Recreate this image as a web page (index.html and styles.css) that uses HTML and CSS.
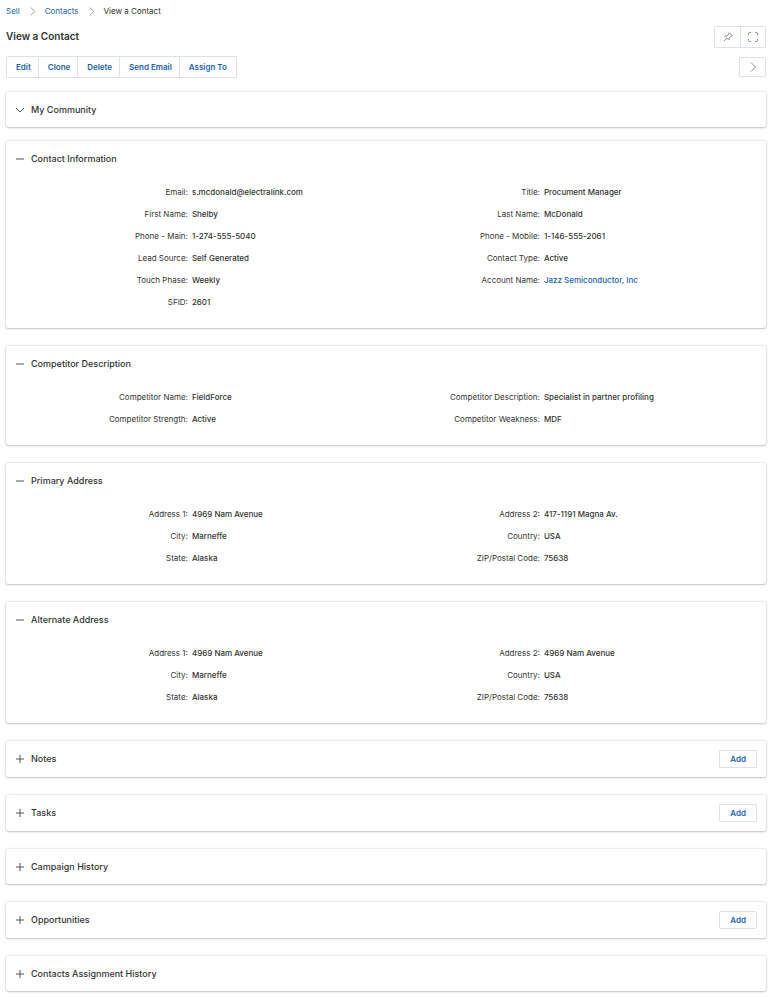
FILE: index.html
```html
<!DOCTYPE html>
<html lang="en">
<head>
<meta charset="utf-8">
<title>View a Contact</title>
<link rel="stylesheet" href="styles.css">
</head>
<body>
<svg class="sprite" aria-hidden="true">
  <symbol id="minus" viewBox="0 0 10 10"><path d="M1 5H9"/></symbol>
  <symbol id="plus" viewBox="0 0 10 10"><path d="M1 5H9M5 1V9"/></symbol>
  <symbol id="down" viewBox="0 0 10 10"><path d="M1 3L5 7L9 3"/></symbol>
  <symbol id="right" viewBox="0 0 10 10"><path d="M3 0.5L7.5 5L3 9.5"/></symbol>
</svg>
<header class="page-head">
  <nav class="crumbs" aria-label="Breadcrumb">
    <a href="#">Sell</a>
    <svg class="icon crumb-sep"><use href="#right"/></svg>
    <a href="#">Contacts</a>
    <svg class="icon crumb-sep"><use href="#right"/></svg>
    <span>View a Contact</span>
  </nav>
  <div class="bar">
    <h1>View a Contact</h1>
    <div class="group tools">
      <button type="button" aria-label="Pin"><svg class="icon" viewBox="0 0 10 10"><path d="M6.2 0.7L9.3 3.8L8.5 4.2L7.9 4.1L6.3 5.8L6.2 7.4L5.6 8L2 4.4L2.6 3.8L4.2 3.7L5.9 2.1L5.8 1.5ZM3.7 6.3L0.8 9.2"/></svg></button>
      <button type="button" aria-label="Full screen"><svg class="icon" viewBox="0 0 10 10"><path d="M0.5 3V1.5Q0.5 0.5 1.5 0.5H3M7 0.5H8.5Q9.5 0.5 9.5 1.5V3M9.5 7V8.5Q9.5 9.5 8.5 9.5H7M3 9.5H1.5Q0.5 9.5 0.5 8.5V7"/></svg></button>
    </div>
  </div>
  <div class="bar">
    <div class="group">
      <button type="button">Edit</button>
      <button type="button">Clone</button>
      <button type="button">Delete</button>
      <button type="button">Send Email</button>
      <button type="button">Assign To</button>
    </div>
    <div class="group next">
      <button type="button" aria-label="Next"><svg class="icon"><use href="#right"/></svg></button>
    </div>
  </div>
</header>
<main>
  <section class="card community">
    <div class="card-head"><h2><button type="button" class="toggle"><svg class="icon"><use href="#down"/></svg>My Community</button></h2></div>
  </section>
  <section class="card">
    <div class="card-head"><h2><button type="button" class="toggle" aria-expanded="true"><svg class="icon"><use href="#minus"/></svg>Contact Information</button></h2></div>
    <div class="fields">
      <dl>
        <dt>Email:</dt><dd>s.mcdonald@electralink.com</dd>
        <dt>First Name:</dt><dd>Shelby</dd>
        <dt>Phone - Main:</dt><dd>1-274-555-5040</dd>
        <dt>Lead Source:</dt><dd>Self Generated</dd>
        <dt>Touch Phase:</dt><dd>Weekly</dd>
        <dt>SFID:</dt><dd>2601</dd>
      </dl>
      <dl>
        <dt>Title:</dt><dd>Procument Manager</dd>
        <dt>Last Name:</dt><dd>McDonald</dd>
        <dt>Phone - Mobile:</dt><dd>1-146-555-2061</dd>
        <dt>Contact Type:</dt><dd>Active</dd>
        <dt>Account Name:</dt><dd><a href="#">Jazz Semiconductor, Inc</a></dd>
      </dl>
    </div>
  </section>
  <section class="card">
    <div class="card-head"><h2><button type="button" class="toggle" aria-expanded="true"><svg class="icon"><use href="#minus"/></svg>Competitor Description</button></h2></div>
    <div class="fields">
      <dl>
        <dt>Competitor Name:</dt><dd>FieldForce</dd>
        <dt>Competitor Strength:</dt><dd>Active</dd>
      </dl>
      <dl>
        <dt>Competitor Description:</dt><dd>Specialist in partner profiling</dd>
        <dt>Competitor Weakness:</dt><dd>MDF</dd>
      </dl>
    </div>
  </section>
  <section class="card">
    <div class="card-head"><h2><button type="button" class="toggle" aria-expanded="true"><svg class="icon"><use href="#minus"/></svg>Primary Address</button></h2></div>
    <div class="fields">
      <dl>
        <dt>Address 1:</dt><dd>4969 Nam Avenue</dd>
        <dt>City:</dt><dd>Marneffe</dd>
        <dt>State:</dt><dd>Alaska</dd>
      </dl>
      <dl>
        <dt>Address 2:</dt><dd>417-1191 Magna Av.</dd>
        <dt>Country:</dt><dd>USA</dd>
        <dt>ZIP/Postal Code:</dt><dd>75638</dd>
      </dl>
    </div>
  </section>
  <section class="card">
    <div class="card-head"><h2><button type="button" class="toggle" aria-expanded="true"><svg class="icon"><use href="#minus"/></svg>Alternate Address</button></h2></div>
    <div class="fields">
      <dl>
        <dt>Address 1:</dt><dd>4969 Nam Avenue</dd>
        <dt>City:</dt><dd>Marneffe</dd>
        <dt>State:</dt><dd>Alaska</dd>
      </dl>
      <dl>
        <dt>Address 2:</dt><dd>4969 Nam Avenue</dd>
        <dt>Country:</dt><dd>USA</dd>
        <dt>ZIP/Postal Code:</dt><dd>75638</dd>
      </dl>
    </div>
  </section>
  <section class="card">
    <div class="card-head"><h2><button type="button" class="toggle" aria-expanded="false"><svg class="icon"><use href="#plus"/></svg>Notes</button></h2><button type="button" class="add">Add</button></div>
  </section>
  <section class="card">
    <div class="card-head"><h2><button type="button" class="toggle" aria-expanded="false"><svg class="icon"><use href="#plus"/></svg>Tasks</button></h2><button type="button" class="add">Add</button></div>
  </section>
  <section class="card">
    <div class="card-head"><h2><button type="button" class="toggle" aria-expanded="false"><svg class="icon"><use href="#plus"/></svg>Campaign History</button></h2></div>
  </section>
  <section class="card">
    <div class="card-head"><h2><button type="button" class="toggle" aria-expanded="false"><svg class="icon"><use href="#plus"/></svg>Opportunities</button></h2><button type="button" class="add">Add</button></div>
  </section>
  <section class="card">
    <div class="card-head"><h2><button type="button" class="toggle" aria-expanded="false"><svg class="icon"><use href="#plus"/></svg>Contacts Assignment History</button></h2></div>
  </section>
</main>
</body>
</html>
```
FILE: styles.css
```css
* { box-sizing: border-box; }

body {
  margin: 0;
  padding: 0 6px 6px;
  background: #fff;
  color: #333;
  font: 400 8px/22px Inter, "Liberation Sans", sans-serif;
}

h1, h2, dl, dd { margin: 0; }

a { color: #1b62a8; text-decoration: none; }

button {
  margin: 0;
  padding: 0;
  border: 0;
  background: none;
  color: inherit;
  font: inherit;
  cursor: pointer;
}

.sprite { display: none; }

.icon {
  width: 10px;
  height: 10px;
  flex: none;
  fill: none;
  stroke: #555;
  stroke-width: 1;
}

/* Page header */
.crumbs {
  display: flex;
  align-items: center;
  gap: 8px;
}

.crumb-sep {
  width: 9px;
  height: 9px;
  stroke: #999;
}

.bar {
  display: flex;
  align-items: center;
  justify-content: space-between;
}

.page-head .bar { height: 30px; }

h1 {
  padding-bottom: 3px;
  font-size: 10px;
  font-weight: 600;
  color: #333;
}

.group {
  display: flex;
  border: 1px solid #dbe2ec;
  border-radius: 1px;
}

.group button {
  height: 20px;
  padding: 0 7px 0 9px;
  color: #1b62a8;
  font-weight: 600;
  line-height: 20px;
}

.group button:last-child { padding-right: 9px; }

.group button + button { border-left: 1px solid #dbe2ec; }

.tools .icon,
.next .icon {
  display: block;
  margin: 0 auto;
  stroke: #888;
}

.tools .group button,
.tools button,
.tools button:last-child { width: 25px; padding: 0; }

.next button,
.next button:last-child { width: 25px; height: 18px; padding: 0; }

/* Cards */
main {
  display: flex;
  flex-direction: column;
  gap: 18px;
  padding-top: 10px;
}

.card {
  border-radius: 2px;
  background: #fff;
  box-shadow: 0 0 2px rgba(40, 40, 60, 0.3), 0 1px 2px rgba(40, 40, 60, 0.2);
}

.community { margin-bottom: -4px; }

.card-head {
  display: flex;
  align-items: center;
  justify-content: space-between;
  min-height: 35px;
  padding: 0 9px;
}

h2 {
  font-size: 9px;
  font-weight: 500;
}

.toggle {
  display: flex;
  align-items: center;
  gap: 6px;
}

.add {
  height: 18px;
  margin: 9px 0;
  padding: 0 10px;
  border: 1px solid #dbe2ec;
  border-radius: 1px;
  color: #1b62a8;
  font-weight: 600;
  line-height: 16px;
}

.fields {
  display: grid;
  grid-template-columns: 1fr 1fr;
  padding: 5px 28px 15px;
}

dl {
  display: grid;
  grid-template-columns: 44% 1fr;
  column-gap: 3px;
  align-content: start;
}

dt {
  padding-right: 1px;
  text-align: right;
  white-space: nowrap;
}

dd { font-weight: 500; }
```
